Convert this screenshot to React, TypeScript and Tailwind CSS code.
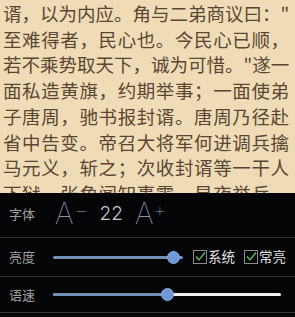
import React from "react";

const lines = [
  "谞，以为内应。角与二弟商议曰：\"",
  "至难得者，民心也。今民心已顺，",
  "若不乘势取天下，诚为可惜。\"遂一",
  "面私造黄旗，约期举事；一面使弟",
  "子唐周，驰书报封谞。唐周乃径赴",
  "省中告变。帝召大将军何进调兵擒",
  "马元义，斩之；次收封谞等一干人",
  "下狱。张角闻知事露，星夜举兵，",
];

const cjk = { fontFamily: '"Noto Sans CJK SC", "Noto Sans", sans-serif' };
const latin = { fontFamily: "Inter, 'DejaVu Sans', sans-serif" };

function Check({ label }: { label: string }) {
  return (
    <div className="flex items-center gap-[1px]">
      <div className="w-[14px] h-[14px] border border-[#8c8c8c] flex items-center justify-center">
        <svg width="12" height="12" viewBox="0 0 12 12">
          <path d="M2 5.5 L5 9 L11 1.5" fill="none" stroke="#5cc25c" strokeWidth="1.3" />
        </svg>
      </div>
      <span className="text-[13.5px] text-[#e0e0e0] leading-none" style={cjk}>{label}</span>
    </div>
  );
}

export default function App() {
  return (
    <div className="w-[295px] h-[317px] overflow-hidden bg-[#050508] flex flex-col">
      <div className="h-[193px] shrink-0 bg-[#efdcb6] overflow-hidden pl-[3px] pt-[1px]">
        {lines.map((l, i) => (
          <div
            key={i}
            className="w-[286px] whitespace-nowrap text-[18.5px] leading-[25.7px] text-[#5a4633] [text-align-last:justify] text-justify"
            style={cjk}
          >
            {l}
          </div>
        ))}
      </div>
      <div className="h-[44px] shrink-0 flex items-center pl-[9px] pb-[3px]">
        <span className="w-[46px] text-[13px] text-[#a0a0a0]" style={cjk}>字体</span>
        <span className="flex items-start text-[#9fb2d4]" style={latin}>
          <span className="text-[29px] font-thin leading-none">A</span>
          <span className="text-[22px] font-thin leading-none mt-[0px] ml-[1px]">−</span>
        </span>
        <span className="ml-[11px] text-[19px] text-[#c8c8c8] leading-none" style={{ fontFamily: "Inter, sans-serif", fontWeight: 300 }}>22</span>
        <span className="ml-[12px] flex items-start text-[#9fb2d4]" style={latin}>
          <span className="text-[29px] font-thin leading-none">A</span>
          <span className="text-[20px] font-thin leading-none mt-[1px]">+</span>
        </span>
      </div>
      <div className="h-px shrink-0 bg-[#333338]" />
      <div className="h-[38px] shrink-0 flex items-center pl-[9px]">
        <span className="w-[44px] text-[13px] text-[#a0a0a0]" style={cjk}>亮度</span>
        <div className="relative w-[130px] h-[3px] bg-[#728fb6] rounded-full">
          <div className="absolute left-[114px] top-[-5px] w-[13px] h-[13px] rounded-full bg-[#6d9ad6] border border-[#88aee0]" />
        </div>
        <div className="ml-[10px] flex items-center gap-[9px]">
          <Check label="系统" />
          <Check label="常亮" />
        </div>
      </div>
      <div className="h-px shrink-0 bg-[#333338]" />
      <div className="h-[35px] shrink-0 flex items-center pl-[9px]">
        <span className="w-[44px] text-[13px] text-[#a0a0a0]" style={cjk}>语速</span>
        <div className="relative w-[228px] h-[3px] bg-[#f2f2f2] rounded-full">
          <div className="absolute left-0 top-0 h-[3px] w-[114px] bg-[#728fb6] rounded-l-full" />
          <div className="absolute left-[108px] top-[-5px] w-[13px] h-[13px] rounded-full bg-[#6d9ad6] border border-[#88aee0]" />
        </div>
      </div>
      <div className="h-px shrink-0 bg-[#333338]" />
    </div>
  );
}
